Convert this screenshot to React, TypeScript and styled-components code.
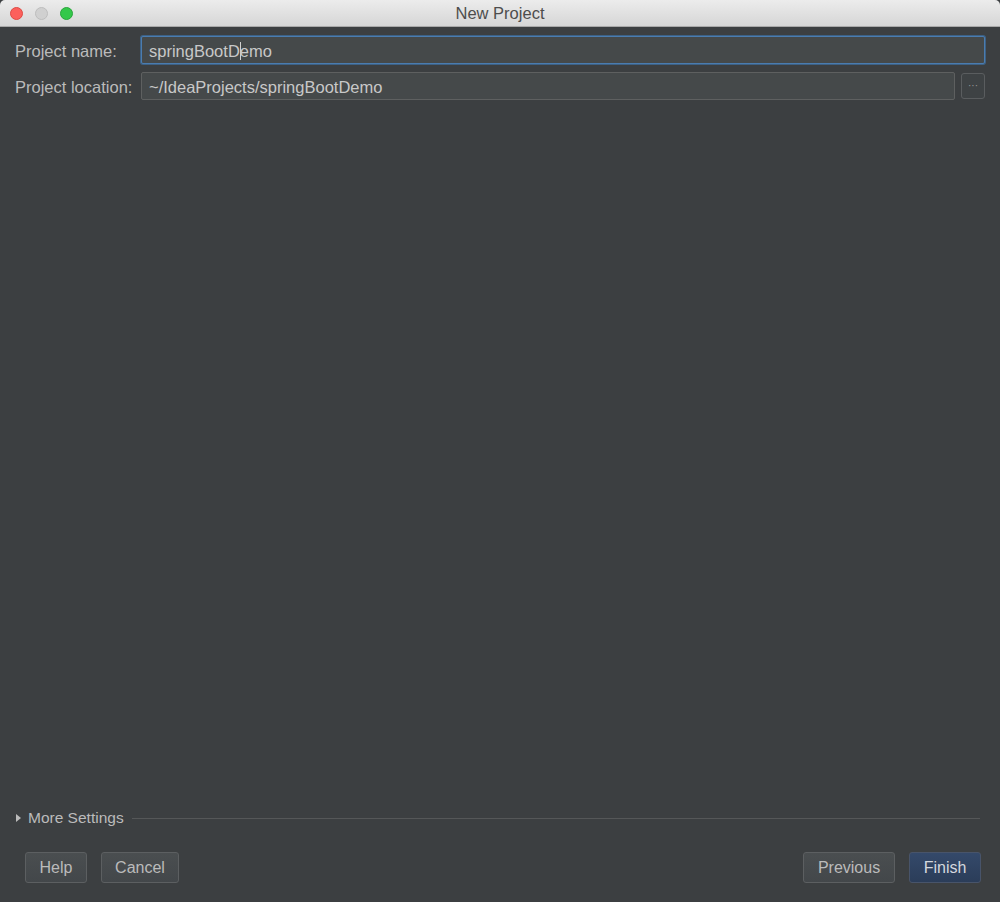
import React from "react";
import styled, { createGlobalStyle } from "styled-components";

const GlobalStyle = createGlobalStyle`
  html, body {
    margin: 0;
    padding: 0;
    background: #3c3f41;
  }
  * {
    box-sizing: border-box;
  }
`;

const Window = styled.div`
  width: 1000px;
  height: 902px;
  display: flex;
  flex-direction: column;
  background: #3c3f41;
  font-family: "Liberation Sans", Arial, sans-serif;
  overflow: hidden;
`;

const TitleBar = styled.div`
  position: relative;
  height: 27px;
  flex-shrink: 0;
  background: linear-gradient(#ececec, #d6d6d6);
  border-bottom: 1px solid #a9a9a9;
  border-radius: 5px 5px 0 0;
  display: flex;
  align-items: center;
  justify-content: center;
  font-size: 16.5px;
  color: #4d4d4d;
`;

const Lights = styled.div`
  position: absolute;
  left: 10px;
  top: 7px;
  display: flex;
  gap: 12px;
`;

const Light = styled.span<{ $color: string; $border: string }>`
  width: 13px;
  height: 13px;
  border-radius: 50%;
  background: ${(p) => p.$color};
  border: 1px solid ${(p) => p.$border};
`;

const Form = styled.div`
  padding: 9px 15px 0 15px;
  display: flex;
  flex-direction: column;
  gap: 8px;
`;

const Row = styled.div`
  display: flex;
  align-items: center;
  height: 28px;
`;

const Label = styled.div`
  width: 126px;
  flex-shrink: 0;
  font-size: 16.5px;
  color: #bbbbbb;
  padding-top: 2px;
`;

const Input = styled.div<{ $focused?: boolean }>`
  flex: 1;
  height: 28px;
  display: flex;
  align-items: center;
  padding: 2px 0 0 7px;
  background: #45494a;
  font-size: 16.5px;
  color: #c8c8c8;
  border: 1px solid ${(p) => (p.$focused ? "#4a7cb0" : "#5e6060")};
  box-shadow: ${(p) => (p.$focused ? "0 0 0 1px #3d6185" : "none")};
  border-radius: 2px;
`;

const Caret = styled.span`
  display: inline-block;
  width: 1px;
  height: 18px;
  background: #d0d0d0;
  margin: 0 -1px 0 0;
`;

const BrowseButton = styled.div`
  width: 24px;
  height: 26px;
  margin-left: 6px;
  flex-shrink: 0;
  border: 1px solid #5a5d5f;
  border-radius: 3px;
  background: #3e4244;
  display: flex;
  align-items: center;
  justify-content: center;
  font-size: 10px;
  color: #999999;
  padding-bottom: 2px;
`;

const Spacer = styled.div`
  flex: 1;
`;

const MoreSettings = styled.div`
  display: flex;
  align-items: center;
  padding: 0 20px 0 14px;
  height: 20px;
  margin-bottom: 24px;
`;

const Arrow = styled.span`
  width: 0;
  height: 0;
  border-top: 4px solid transparent;
  border-bottom: 4px solid transparent;
  border-left: 5px solid #bbbbbb;
  margin: 0 7px 0 2px;
`;

const MoreLabel = styled.span`
  font-size: 15.5px;
  color: #bbbbbb;
`;

const Rule = styled.div`
  flex: 1;
  height: 1px;
  background: #555758;
  margin-left: 8px;
`;

const ButtonBar = styled.div`
  display: flex;
  align-items: center;
  padding: 0 19px 19px 25px;
  gap: 14px;
`;

const Button = styled.div<{ $primary?: boolean; $w: number }>`
  width: ${(p) => p.$w}px;
  height: 31px;
  border-radius: 3px;
  display: flex;
  align-items: center;
  justify-content: center;
  font-size: 16px;
  color: ${(p) => (p.$primary ? "#d4d8de" : "#bbbbbb")};
  background: ${(p) =>
    p.$primary
      ? "linear-gradient(#34496a, #2b3d59)"
      : "linear-gradient(#4a4e50, #43474a)"};
  border: 1px solid ${(p) => (p.$primary ? "#48546a" : "#5c5f61")};
`;

export default function App() {
  return (
    <Window>
      <GlobalStyle />
      <TitleBar>
        <Lights>
          <Light $color="#fc605c" $border="#de4a43" />
          <Light $color="#d0d0d0" $border="#bdbdbd" />
          <Light $color="#34c84a" $border="#2aa63b" />
        </Lights>
        New Project
      </TitleBar>
      <Form>
        <Row>
          <Label>Project name:</Label>
          <Input $focused>
            springBootD
            <Caret />
            emo
          </Input>
        </Row>
        <Row>
          <Label>Project location:</Label>
          <Input>~/IdeaProjects/springBootDemo</Input>
          <BrowseButton>···</BrowseButton>
        </Row>
      </Form>
      <Spacer />
      <MoreSettings>
        <Arrow />
        <MoreLabel>More Settings</MoreLabel>
        <Rule />
      </MoreSettings>
      <ButtonBar>
        <Button $w={62}>Help</Button>
        <Button $w={78}>Cancel</Button>
        <Spacer />
        <Button $w={92}>Previous</Button>
        <Button $w={72} $primary>
          Finish
        </Button>
      </ButtonBar>
    </Window>
  );
}
